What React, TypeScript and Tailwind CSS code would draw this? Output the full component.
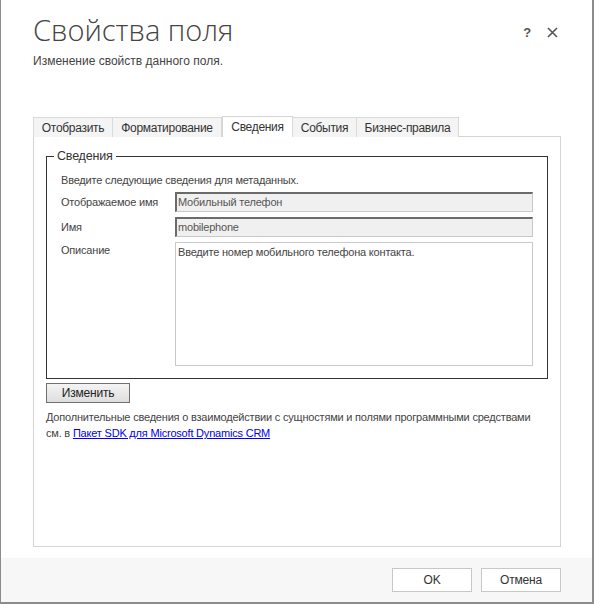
import React from "react";

const font = { fontFamily: '"Liberation Sans", Arial, sans-serif' };

export default function App() {
  const tabs = [
    { label: "Отобразить", w: "w-[80px]" },
    { label: "Форматирование", w: "w-[110px]" },
    { label: "Сведения", w: "w-[71px]", active: true },
    { label: "События", w: "w-[65px]" },
    { label: "Бизнес-правила", w: "w-[103px]" },
  ];
  return (
    <div
      className="w-[594px] h-[604px] bg-white border-l border-r-2 border-b-2 border-[#8c8c8c] flex flex-col text-[11px] tracking-[-0.2px] text-[#444]"
      style={font}
    >
      {/* header */}
      <div className="flex items-start pl-[32px] pr-[32px] pt-[12px]">
        <div className="flex-1">
          <div
            className="text-[29px] leading-[36px] font-light tracking-normal text-[#444]"
            style={{ fontFamily: '"Open Sans", "Noto Sans", sans-serif' }}
          >
            Свойства поля
          </div>
          <div className="mt-[5px] leading-[16px] text-[12px] tracking-normal text-[#444]">Изменение свойств данного поля.</div>
        </div>
        <div className="flex items-center gap-[16px] pt-[11px] pr-[2px] text-[#555]">
          <span className="text-[13px] font-bold">?</span>
          <svg width="11" height="11" viewBox="0 0 11 11">
            <path d="M1 1 L10 10 M10 1 L1 10" stroke="#555" strokeWidth="1.6" />
          </svg>
        </div>
      </div>

      {/* body */}
      <div className="flex-1 flex flex-col pl-[32px] pr-[31px] pt-[48px]">
        {/* tabs */}
        <div className="flex h-[20px] relative z-10 text-[12px] tracking-[-0.3px]">
          {tabs.map((t, i) =>
            t.active ? (
              <div
                key={i}
                className={`${t.w} h-[21px] -mt-[1px] bg-white border border-b-0 border-[#d4d4d4] flex items-center justify-center text-[#333]`}
              >
                {t.label}
              </div>
            ) : (
              <div
                key={i}
                className={`${t.w} h-[20px] bg-[#f4f4f4] border border-b-0 border-[#dadada] -ml-px first:ml-0 flex items-center justify-center text-[#333]`}
              >
                {t.label}
              </div>
            )
          )}
        </div>
        <div className="h-[411px] -mt-px border border-[#d4d4d4] px-[12px] pt-[11px]">
          <fieldset className="border border-[#333] px-[14px] pb-[12px] pt-0">
            <legend className="ml-[-7px] px-[3px] text-[12.5px] tracking-[-0.2px] leading-[16px] text-[#333]">Сведения</legend>
            <div className="mt-[8px] leading-[16px] text-[#444]">Введите следующие сведения для метаданных.</div>
            <div className="mt-[4px] flex items-center">
              <div className="w-[114px] text-[#444] whitespace-nowrap">Отображаемое имя</div>
              <div className="flex-1 h-[20px] bg-[#f0f0f0] border-t-2 border-l-2 border-r border-b border-t-[#6b6b6b] border-l-[#6b6b6b] border-r-[#c8c8c8] border-b-[#c8c8c8] pl-[1px] flex items-center text-[#555]">
                Мобильный телефон
              </div>
            </div>
            <div className="mt-[5px] flex items-center">
              <div className="w-[114px] text-[#444]">Имя</div>
              <div className="flex-1 h-[20px] bg-[#f0f0f0] border-t-2 border-l-2 border-r border-b border-t-[#6b6b6b] border-l-[#6b6b6b] border-r-[#c8c8c8] border-b-[#c8c8c8] pl-[1px] flex items-center text-[#555]">
                mobilephone
              </div>
            </div>
            <div className="mt-[5px] flex items-start">
              <div className="w-[114px] text-[#444] leading-[16px]">Описание</div>
              <div className="flex-1 h-[124px] bg-white border border-[#c8c8c8] px-[2px] pt-[1px] leading-[16px] text-[#444]">
                Введите номер мобильного телефона контакта.
              </div>
            </div>
          </fieldset>
          <button className="mt-[4px] w-[84px] h-[20px] border border-[#707070] bg-gradient-to-b from-[#f4f4f4] to-[#dedede] text-[12px] text-[#222] flex items-center justify-center leading-none">
            Изменить
          </button>
          <div className="mt-[6px] leading-[16px] text-[#444]">
            Дополнительные сведения о взаимодействии с сущностями и полями программными средствами см. в{" "}
            <a className="text-[#0000ee] underline" href="#">
              Пакет SDK для Microsoft Dynamics CRM
            </a>
          </div>
        </div>
      </div>

      {/* footer */}
      <div className="h-[44px] mt-[10px] bg-[#f7f7f7] flex items-start justify-end gap-[9px] pr-[31px] pt-[10px] text-[12px]">
        <button className="w-[80px] h-[24px] bg-white border border-[#c8c8c8] text-[#333]">OK</button>
        <button className="w-[80px] h-[24px] bg-white border border-[#c8c8c8] text-[#333]">Отмена</button>
      </div>
    </div>
  );
}
